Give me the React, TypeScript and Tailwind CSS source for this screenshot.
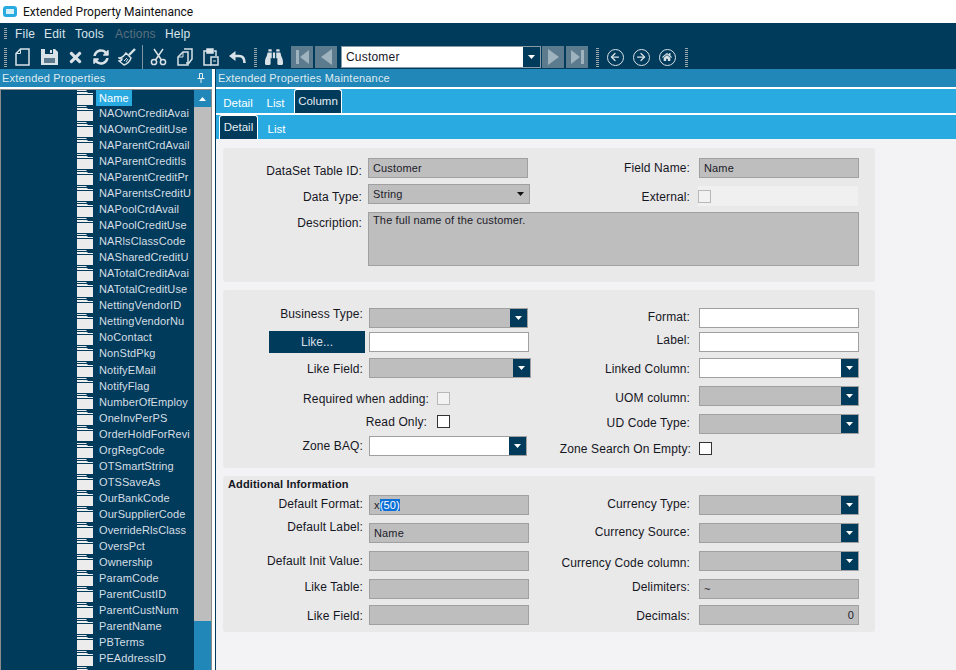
import React from "react";
import { FaTimes, FaSyncAlt, FaBinoculars, FaHome } from "react-icons/fa";
import { ArrowLeft, ArrowRight } from "lucide-react";

const names = ["NAOwnCreditAvai","NAOwnCreditUse","NAParentCrdAvail","NAParentCreditIs","NAParentCreditPr","NAParentsCreditU","NAPoolCrdAvail","NAPoolCreditUse","NARlsClassCode","NASharedCreditU","NATotalCreditAvai","NATotalCreditUse","NettingVendorID","NettingVendorNu","NoContact","NonStdPkg","NotifyEMail","NotifyFlag","NumberOfEmploy","OneInvPerPS","OrderHoldForRevi","OrgRegCode","OTSmartString","OTSSaveAs","OurBankCode","OurSupplierCode","OverrideRlsClass","OversPct","Ownership","ParamCode","ParentCustID","ParentCustNum","ParentName","PBTerms","PEAddressID","PESoldToAddr"];

const Folder = () => (
  <svg width="16" height="15" viewBox="0 0 16 15" className="shrink-0">
    <path d="M0 0h9l1 1H0z" fill="#e8e8e8" />
    <path d="M0 2h10l1 1h5v1H0z" fill="#f0f0f0" />
    <rect x="0" y="5" width="16" height="10" fill="#ececec" />
  </svg>
);

const Caret = ({ c = "#ffffff" }: { c?: string }) => (
  <svg width="7" height="4" viewBox="0 0 7 4"><path d="M0 0h7L3.5 4z" fill={c} /></svg>
);

const Grip = () => (
  <div className="w-[3px] h-[19px] bg-[repeating-linear-gradient(to_bottom,#9aa6ad_0px,#9aa6ad_1px,transparent_1px,transparent_2px)]" />
);

const Slot = ({ w, children }: { w: string; children: React.ReactNode }) => (
  <div className={`${w} h-[22px] flex items-center justify-center text-[#d9e2e7]`}>{children}</div>
);

const NavBtn = ({ children }: { children: React.ReactNode }) => (
  <div className="w-[22px] h-[22px] bg-[#5c7b8e] flex items-center justify-center">{children}</div>
);

const Field = ({ w = "w-[160px]", h = "h-[20px]", lead = "leading-[18px]", white, text, right, selectBtn }: { w?: string; h?: string; lead?: string; white?: boolean; text?: React.ReactNode; right?: boolean; selectBtn?: boolean }) => (
  <div className={`${w} ${h} shrink-0 border border-[#a0a0a0] flex ${white ? "bg-white" : "bg-[#bebebe]"} text-[11px] tracking-[0.15px] text-[#1c1c2a]`}>
    <div className={`flex-1 px-[4px] ${lead} ${right ? "text-right" : ""}`}>{text}</div>
    {selectBtn && (
      <div className="w-[17px] bg-[#003b5c] flex items-center justify-center"><Caret /></div>
    )}
  </div>
);

const Row = ({ label, lw, gap, shift = "", mt = "", children }: { label: string; lw: string; gap: string; shift?: string; mt?: string; children: React.ReactNode }) => (
  <div className={`flex items-center h-[20px] ${gap} ${mt}`}>
    <div className={`${lw} ${shift} shrink-0 text-right whitespace-nowrap leading-[14px]`}>{label}</div>
    {children}
  </div>
);

const Check = ({ disabled }: { disabled?: boolean }) => (
  <div className={`w-[13px] h-[13px] shrink-0 border ${disabled ? "border-[#b8b8b8] bg-[#f2f2f2]" : "border-[#333] bg-white"}`} />
);

const Tab = ({ label, active, w }: { label: string; active?: boolean; w: string }) =>
  active ? (
    <div className={`${w} h-[24px] bg-[#003b5c] border border-b-0 border-white rounded-t-[3px] text-center text-[11.5px] tracking-normal text-[#e6eef2] leading-[22px]`}>{label}</div>
  ) : (
    <div className={`${w} h-[24px] text-center text-[11.5px] tracking-normal text-white leading-[29px]`}>{label}</div>
  );

const L = "w-[140px]";
const R = "w-[141px]";

export default function App() {
  return (
    <div className="w-[956px] h-[670px] overflow-hidden flex flex-col bg-white text-[12px] tracking-[0.12px] text-[#16161f] font-['Liberation_Sans',Arial,sans-serif]">
      {/* Title bar */}
      <div className="h-[23px] flex items-center shrink-0 pl-[3px] gap-[6px] bg-white">
        <div className="w-[14px] h-[11px] rounded-[3px] border-[3px] border-[#29abe2] bg-[#d8f1fb]" />
        <span className="font-['Roboto',sans-serif] text-[12px] tracking-normal text-[#111]">Extended Property Maintenance</span>
      </div>

      {/* Menu */}
      <div className="h-[22px] shrink-0 bg-[#003b5c] flex items-center pl-[4px] text-[#dbe5ea] text-[12px] tracking-[0.2px]">
        <div className="w-[3px] h-[12px] mr-[8px] bg-[repeating-linear-gradient(to_bottom,#9aa6ad_0px,#9aa6ad_1px,transparent_1px,transparent_2px)]" />
        <span className="w-[29px]">File</span>
        <span className="w-[31px]">Edit</span>
        <span className="w-[40px]">Tools</span>
        <span className="w-[50px] text-[#5d6f7a]">Actions</span>
        <span>Help</span>
      </div>

      {/* Toolbar */}
      <div className="h-[24px] shrink-0 bg-[#003b5c] flex items-center pl-[4px]">
        <Grip />
        <div className="w-[2px]" />
        <Slot w="w-[27px]">
          <svg width="15" height="18" viewBox="0 0 15 18" fill="none" stroke="#d9e2e7" strokeWidth="1.5"><path d="M5.5 1H14v16H1V5.5z" /><path d="M5.5 1v4.5H1" strokeWidth="1" /></svg>
        </Slot>
        <Slot w="w-[26px]">
          <svg width="17" height="16" viewBox="0 0 17 16"><path d="M0 0h14l3 3v13H0z" fill="#d9e2e7" /><rect x="4" y="0" width="8" height="5" fill="#003b5c" /><rect x="9" y="1" width="2" height="3" fill="#d9e2e7" /><rect x="3" y="9" width="11" height="5" fill="#5c7b8e" /></svg>
        </Slot>
        <Slot w="w-[26px]"><FaTimes size={17} /></Slot>
        <Slot w="w-[25px]"><FaSyncAlt size={16} /></Slot>
        <Slot w="w-[28px]">
          <svg width="18" height="18" viewBox="0 0 18 18" fill="none" stroke="#d9e2e7" strokeWidth="1.4"><path d="M17 1l-6 6" strokeWidth="2.4" /><path d="M8 5l5 5c-1 3-4 6-7 7l-5-4c2 0 3-1 3-2-1 0-2 0-3-1 3 0 5-2 7-5z" /><path d="M6 13l3-3M8 14l2-3" strokeWidth="1" /></svg>
        </Slot>
        <div className="w-px h-[24px] bg-[#7d939f] ml-[1px] mr-[2px]" />
        <Slot w="w-[27px]">
          <svg width="17" height="18" viewBox="0 0 17 18" fill="none" stroke="#d9e2e7" strokeWidth="1.5"><circle cx="4" cy="14" r="2.6" /><circle cx="13" cy="14" r="2.6" /><path d="M5.5 12L13 1M11.5 12L4 1" /></svg>
        </Slot>
        <Slot w="w-[26px]">
          <svg width="16" height="18" viewBox="0 0 16 18" fill="none" stroke="#d9e2e7" strokeWidth="1.5"><path d="M7 1h8v10l-3 4H9" /><path d="M1 9l5-5h5v13H1z" /><path d="M1 9h5V4" strokeWidth="1" /></svg>
        </Slot>
        <Slot w="w-[26px]">
          <svg width="16" height="18" viewBox="0 0 16 18" fill="none" stroke="#d9e2e7" strokeWidth="1.5"><path d="M4 3H1v14h7M11 3h2v5" /><rect x="4" y="1" width="6" height="4" fill="#d9e2e7" /><rect x="8" y="9" width="7" height="8" /><path d="M10 13h3" strokeWidth="1" /></svg>
        </Slot>
        <Slot w="w-[26px]">
          <svg width="17" height="13" viewBox="0 0 17 13" fill="none"><path d="M0 5l6.500-5v10z" fill="#d9e2e7" /><path d="M5 5h5c3.500 0 5.500 2.500 5.500 7" stroke="#d9e2e7" strokeWidth="2.600" /></svg>
        </Slot>
        <div className="w-[4px]" />
        <Grip />
        <div className="w-[4px]" />
        <Slot w="w-[26px]"><FaBinoculars size={18} /></Slot>
        <div className="w-[4px]" />
        <div className="flex gap-[2px]">
          <NavBtn><svg width="13" height="14" viewBox="0 0 13 14" fill="#9fb3be"><rect width="3" height="14" /><path d="M13 0v14L4 7z" /></svg></NavBtn>
          <NavBtn><svg width="11" height="16" viewBox="0 0 11 16" fill="#9fb3be"><path d="M11 0v16L0 8z" /></svg></NavBtn>
        </div>
        <div className="w-[4px]" />
        <div className="w-[200px] h-[22px] bg-white border border-[#8a9aa4] flex items-center text-[12px] tracking-[0.2px] text-[#16161f]">
          <span className="flex-1 pl-[4px]">Customer</span>
          <div className="w-[17px] h-full bg-[#003b5c] flex items-center justify-center"><Caret /></div>
        </div>
        <div className="w-[1px]" />
        <div className="flex gap-[2px]">
          <NavBtn><svg width="11" height="16" viewBox="0 0 11 16" fill="#9fb3be"><path d="M0 0v16L11 8z" /></svg></NavBtn>
          <NavBtn><svg width="13" height="14" viewBox="0 0 13 14" fill="#9fb3be"><rect x="10" width="3" height="14" /><path d="M0 0v14L9 7z" /></svg></NavBtn>
        </div>
        <div className="w-[8px]" />
        <Grip />
        <div className="w-[3px]" />
        {[<ArrowLeft key="a" size={12} strokeWidth={2.5} />, <ArrowRight key="b" size={12} strokeWidth={2.5} />, <FaHome key="c" size={10} />].map((icon, i) => (
          <div key={i} className="w-[26px] flex justify-center">
            <div className="w-[17px] h-[17px] rounded-full border-[1.5px] border-[#d9e2e7] flex items-center justify-center text-[#d9e2e7]">{icon}</div>
          </div>
        ))}
        <div className="w-[5px]" />
        <Grip />
      </div>

      {/* Body */}
      <div className="flex flex-1 min-h-0">
        {/* Left dock */}
        <div className="w-[212px] shrink-0 flex flex-col">
          <div className="h-[18px] bg-[#2187b8] flex items-center justify-between pl-[2px] pr-[7px] text-[11px] tracking-[0.2px] text-[#dfeaf0] shrink-0">
            <span>Extended Properties</span>
            <svg width="8" height="10" viewBox="0 0 8 10" fill="none" stroke="#e6eef2"><path d="M2.5.5h3v5h-3zM.5 5.5h7M4 6v4" /></svg>
          </div>
          <div className="h-[2px] bg-white shrink-0" />
          <div className="flex-1 min-h-0 flex bg-[#003b5c] border-x border-[#8b8b8b] border-t overflow-hidden">
            <div className="flex-1 min-w-0 overflow-hidden pl-[76px] text-[11px] tracking-[0.1px] text-[#d6dee3]">
              <div className="h-[15px] flex items-center">
                <Folder />
                <div className="ml-[3px] h-[16px] px-[3px] bg-[#29abe2] text-white leading-[16px]">Name</div>
              </div>
              {names.map((n) => (
                <div key={n} className="h-[16.05px] flex items-center whitespace-nowrap">
                  <Folder />
                  <span className="ml-[6px]">{n}</span>
                </div>
              ))}
            </div>
            <div className="w-[17px] shrink-0 flex flex-col">
              <div className="h-[17px] bg-[#2187b8] flex items-center justify-center">
                <svg width="7" height="4" viewBox="0 0 7 4"><path d="M0 4h7L3.5 0z" fill="#fff" /></svg>
              </div>
              <div className="h-[514px] bg-[#bdbdbd]" />
              <div className="flex-1 bg-[#2187b8]" />
            </div>
          </div>
        </div>
        <div className="w-[3px] bg-white shrink-0" />
        <div className="w-px bg-[#003b5c] shrink-0" />

        {/* Right */}
        <div className="flex-1 min-w-0 flex flex-col bg-[#f3f3f5]">
          <div className="h-[18px] bg-[#2187b8] shrink-0 pl-[2px] flex items-center text-[11px] tracking-[0.2px] text-[#dfeaf0]">Extended Properties Maintenance</div>
          <div className="h-[2px] bg-white shrink-0" />
          <div className="h-[24px] bg-[#29abe2] flex items-end pl-[3px] shrink-0">
            <Tab label="Detail" w="w-[38px]" />
            <Tab label="List" w="w-[37px]" />
            <Tab label="Column" active w="w-[48px]" />
          </div>
          <div className="h-[2px] bg-white shrink-0" />
          <div className="h-[24px] bg-[#29abe2] flex items-end pl-[3px] shrink-0">
            <Tab label="Detail" active w="w-[39px]" />
            <Tab label="List" w="w-[37px]" />
          </div>

          <div className="flex flex-col gap-[8px] pl-[7px] pt-[9px]">
            {/* Panel 1 */}
            <div className="w-[652px] h-[134px] bg-[#e9e9e9] rounded-[3px] pt-[10px]">
              <div className="flex">
                <div className="w-[326px]">
                  <Row label="DataSet Table ID:" lw="w-[139px]" gap="gap-[6px]" shift="pt-[6px]"><Field text="Customer" /></Row>
                  <Row label="Data Type:" lw="w-[139px]" gap="gap-[6px]" shift="pt-[6px]" mt="mt-[6px]">
                    <div className="w-[162px] h-[20px] border border-[#a0a0a0] bg-[#bebebe] flex items-center justify-between pl-[4px] pr-[5px] text-[11px] text-[#1c1c2a]">
                      <span>String</span><Caret c="#111" />
                    </div>
                  </Row>
                </div>
                <div className="w-[326px]">
                  <Row label="Field Name:" lw={R} gap="gap-[9px]"><Field text="Name" /></Row>
                  <div className="mt-[8px] flex items-center h-[20px]">
                    <div className="w-[141px] text-right pt-[2px] shrink-0">External:</div>
                    <div className="ml-[8px] w-[160px] h-[20px] bg-[#f0f0f0] flex items-center"><Check disabled /></div>
                  </div>
                </div>
              </div>
              <div className="mt-[6px]">
                <div className="flex gap-[6px] items-start">
                  <div className="w-[139px] text-right pt-[4px] leading-[14px]">Description:</div>
                  <Field w="w-[491px]" h="h-[54px]" lead="leading-[14px]" text="The full name of the customer." />
                </div>
              </div>
            </div>

            {/* Panel 2 */}
            <div className="w-[652px] h-[178px] bg-[#e9e9e9] rounded-[3px] pt-[18px] flex">
              <div className="w-[326px] flex flex-col">
                <Row label="Business Type:" lw={L} gap="gap-[6px]" shift="pb-[8px]"><Field w="w-[159px]" selectBtn /></Row>
                <div className="flex items-center mt-[3px] pl-[46px] gap-[4px]">
                  <div className="w-[96px] h-[22px] bg-[#003b5c] text-[#d6dee3] tracking-normal text-center leading-[22px]">Like...</div>
                  <Field white />
                </div>
                <Row label="Like Field:" lw={L} gap="gap-[6px]" mt="mt-[5px]" shift="pt-[2px]"><Field w="w-[162px]" selectBtn /></Row>
                <div className="flex items-center mt-[14px] gap-[8px] h-[13px]">
                  <div className="w-[206px] text-right shrink-0">Required when adding:</div>
                  <Check disabled />
                </div>
                <div className="flex items-center mt-[10px] gap-[10px] h-[13px]">
                  <div className="w-[204px] text-right shrink-0">Read Only:</div>
                  <Check />
                </div>
                <Row label="Zone BAQ:" lw={L} gap="gap-[6px]" mt="mt-[8px]"><Field w="w-[158px]" white selectBtn /></Row>
              </div>
              <div className="w-[326px] flex flex-col">
                <Row label="Format:" lw={R} gap="gap-[9px]" shift="pb-[2px]"><Field white /></Row>
                <Row label="Label:" lw={R} gap="gap-[9px]" mt="mt-[4px]" shift="pb-[4px]"><Field white /></Row>
                <Row label="Linked Column:" lw={R} gap="gap-[9px]" mt="mt-[6px]" shift="pt-[2px]"><Field white selectBtn /></Row>
                <Row label="UOM column:" lw={R} gap="gap-[9px]" mt="mt-[8px]" shift="pt-[4px]"><Field selectBtn /></Row>
                <Row label="UD Code Type:" lw={R} gap="gap-[9px]" mt="mt-[8px]" shift="pb-[2px]"><Field selectBtn /></Row>
                <div className="flex items-center mt-[8px] gap-[8px] h-[13px]">
                  <div className="w-[142px] text-right whitespace-nowrap shrink-0">Zone Search On Empty:</div>
                  <Check />
                </div>
              </div>
            </div>

            {/* Panel 3 */}
            <div className="w-[652px] h-[156px] bg-[#e9e9e9] rounded-[3px] pt-[1px]">
              <div className="font-bold pl-[5px] h-[18px] leading-[14px] text-[11px] tracking-[0.15px]">Additional Information</div>
              <div className="flex">
                <div className="w-[326px] flex flex-col">
                  <Row label="Default Format:" lw={L} gap="gap-[6px]" shift="pb-[2px]">
                    <Field text={<span>x<span className="bg-[#0a6fd6] text-white">(50)</span></span>} />
                  </Row>
                  <Row label="Default Label:" lw={L} gap="gap-[6px]" mt="mt-[8px]" shift="pb-[12px]"><Field text="Name" /></Row>
                  <Row label="Default Init Value:" lw={L} gap="gap-[6px]" mt="mt-[8px]"><Field /></Row>
                  <Row label="Like Table:" lw={L} gap="gap-[6px]" mt="mt-[8px]" shift="pb-[4px]"><Field /></Row>
                  <Row label="Like Field:" lw={L} gap="gap-[6px]" mt="mt-[6px]" shift="pt-[2px]"><Field /></Row>
                </div>
                <div className="w-[326px] flex flex-col">
                  <Row label="Currency Type:" lw={R} gap="gap-[9px]" shift="pb-[2px]"><Field selectBtn /></Row>
                  <Row label="Currency Source:" lw={R} gap="gap-[9px]" mt="mt-[8px]" shift="pb-[2px]"><Field selectBtn /></Row>
                  <Row label="Currency Code column:" lw={R} gap="gap-[9px]" mt="mt-[8px]" shift="pt-[4px]"><Field selectBtn /></Row>
                  <Row label="Delimiters:" lw={R} gap="gap-[9px]" mt="mt-[8px]" shift="pb-[4px]"><Field text="~" /></Row>
                  <Row label="Decimals:" lw={R} gap="gap-[9px]" mt="mt-[6px]" shift="pt-[2px]"><Field text="0" right /></Row>
                </div>
              </div>
            </div>
          </div>
        </div>
      </div>
    </div>
  );
}
